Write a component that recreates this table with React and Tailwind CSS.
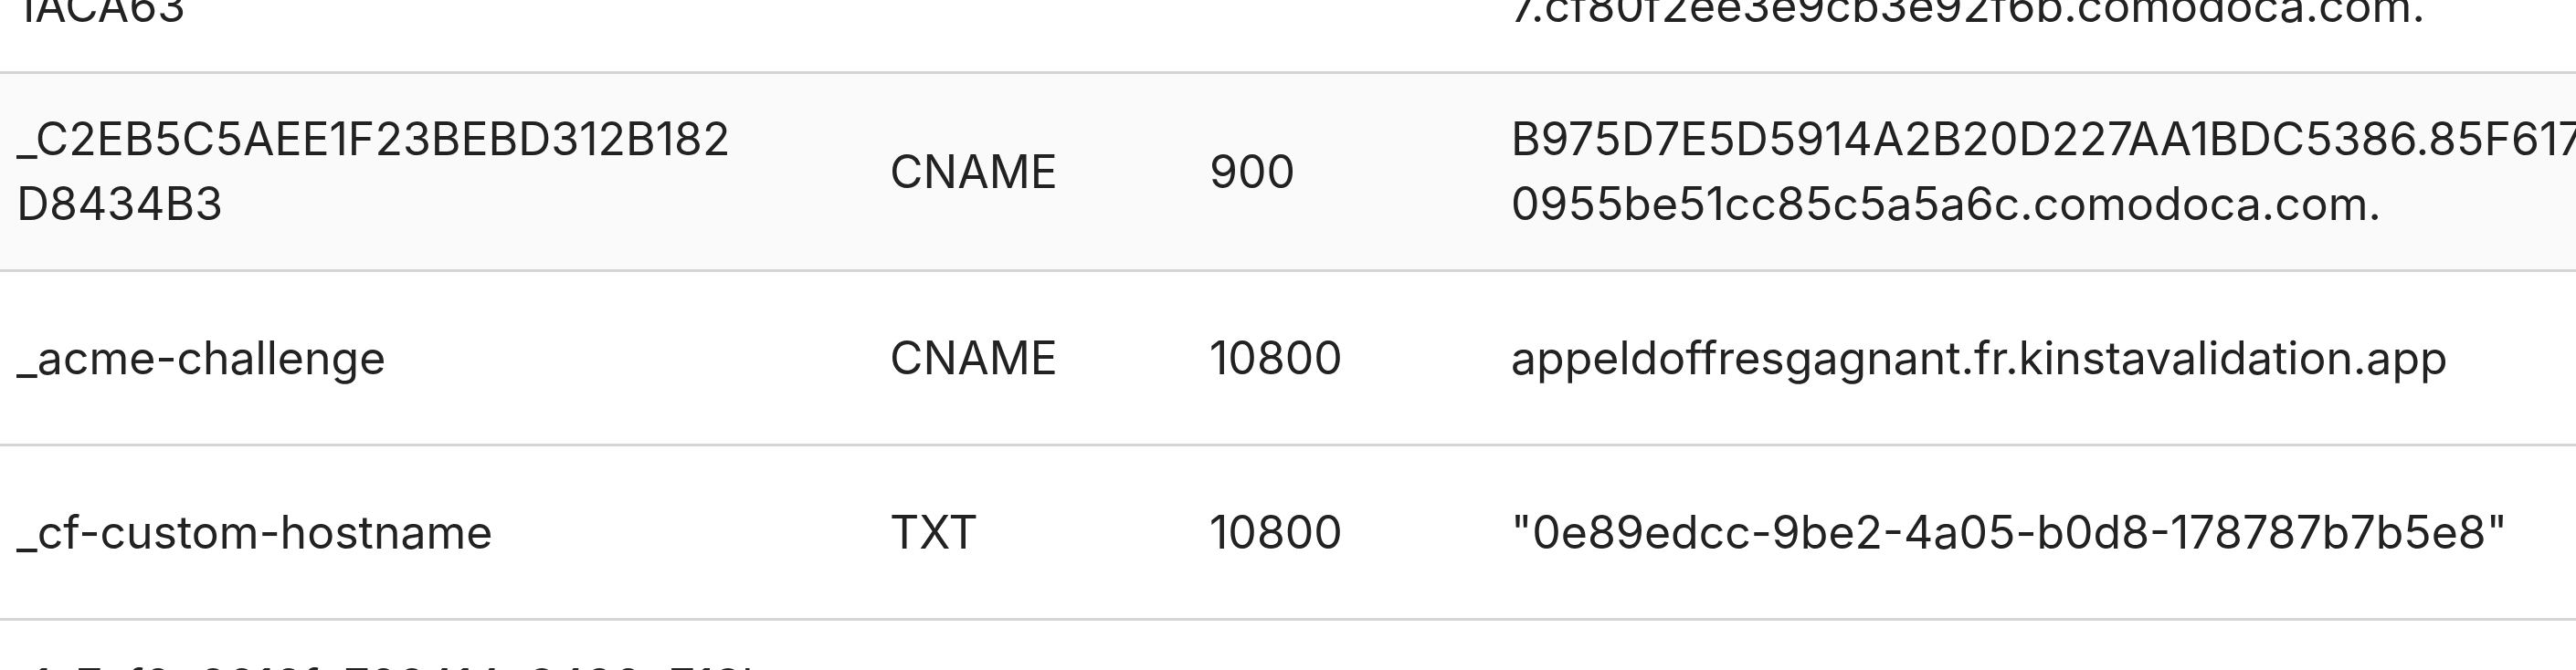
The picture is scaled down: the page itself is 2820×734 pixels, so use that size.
import React from "react";

const rows = [
  {
    name: ["_9F1B3C7D2E4A6B8C0D1E2F3A4B5C6D", "1ACA63"],
    type: "CNAME",
    ttl: "900",
    value: ["4E8D2A1C6B9F3E7D0A5C2B8E1F4D6A93.5C8D2A1F3E6B9C0D4A7E2F8B1C5D9A3", "7.cf80f2ee3e9cb3e92f6b.comodoca.com."],
    bg: "bg-white",
  },
  {
    name: ["_C2EB5C5AEE1F23BEBD312B182", "D8434B3"],
    type: "CNAME",
    ttl: "900",
    value: ["B975D7E5D5914A2B20D227AA1BDC5386.85F6174E2A9C3D7B1F80E6A2C4D8B5F1", "0955be51cc85c5a5a6c.comodoca.com."],
    bg: "bg-[#fafafa]",
  },
  {
    name: ["_acme-challenge"],
    type: "CNAME",
    ttl: "10800",
    value: ["appeldoffresgagnant.fr.kinstavalidation.app"],
    bg: "bg-white",
  },
  {
    name: ["_cf-custom-hostname"],
    type: "TXT",
    ttl: "10800",
    value: ['"0e89edcc-9be2-4a05-b0d8-178787b7b5e8"'],
    bg: "bg-white",
  },
  {
    name: ["_1a7ef0e2616fa702414c8490e718b", "5C2D"],
    type: "CNAME",
    ttl: "900",
    value: ["_1a7ef0e2616fa702414c8490e718b.validation.example.app"],
    bg: "bg-white",
  },
];

function Cell({ lines }) {
  return (
    <div className="flex flex-col justify-center px-[18px] py-[36px]">
      {lines.map((l, i) => (
        <div key={i} className="whitespace-nowrap">
          {l}
        </div>
      ))}
    </div>
  );
}

export default function App() {
  return (
    <div
      className="w-[2820px] h-[734px] overflow-hidden bg-white text-[#222222] text-[50px] leading-[71px]"
      style={{ fontFamily: "Inter, 'Noto Sans', sans-serif" }}
    >
      <div className="-mt-[136px] w-[3600px]">
        {rows.map((r, i) => (
          <div
            key={i}
            className={`grid grid-cols-[956px_350px_330px_1fr] min-h-[191px] border-b-[3px] border-[#d4d4d4] ${r.bg}`}
          >
            <Cell lines={r.name} />
            <Cell lines={[r.type]} />
            <Cell lines={[r.ttl]} />
            <Cell lines={r.value} />
          </div>
        ))}
      </div>
    </div>
  );
}
